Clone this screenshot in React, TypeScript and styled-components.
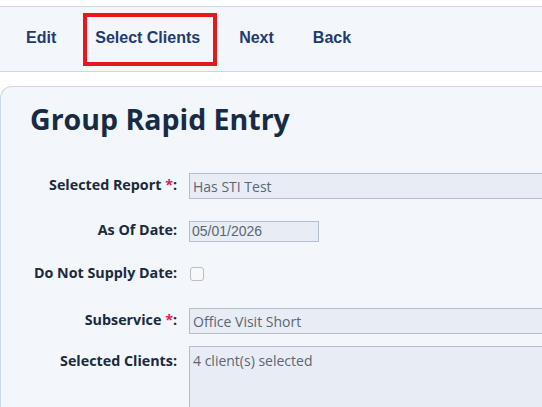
import React from "react";
import styled, { createGlobalStyle } from "styled-components";

const GlobalStyle = createGlobalStyle`
  html, body {
    margin: 0;
    padding: 0;
    background: #ffffff;
    overflow: hidden;
  }
`;

type NavItem = { label: string; active?: boolean };

const navItems: NavItem[] = [
  { label: "Edit" },
  { label: "Select Clients", active: true },
  { label: "Next" },
  { label: "Back" },
];

const App: React.FC = () => {
  return (
    <Page>
      <GlobalStyle />
      <Toolbar>
        {navItems.map((item) => (
          <NavButton key={item.label} $active={item.active}>
            {item.label}
          </NavButton>
        ))}
      </Toolbar>
      <Card>
        <Title>Group Rapid Entry</Title>
        <Form>
          <Row $height={26} $after={21}>
            <Label>
              Selected Report <Required>*</Required>:
            </Label>
            <TextField readOnly value="Has STI Test" />
          </Row>
          <Row $height={21} $after={20}>
            <Label>As Of Date:</Label>
            <DateField readOnly value="05/01/2026" />
          </Row>
          <Row $height={26} $after={21}>
            <Label>Do Not Supply Date:</Label>
            <Checkbox />
          </Row>
          <Row $height={26} $after={12}>
            <Label>
              Subservice <Required>*</Required>:
            </Label>
            <TextField readOnly value="Office Visit Short" />
          </Row>
          <Row $height={90} $after={0} $top>
            <Label $top>Selected Clients:</Label>
            <ClientsBox readOnly value="4 client(s) selected" />
          </Row>
        </Form>
      </Card>
    </Page>
  );
};

export default App;

const Page = styled.div`
  padding-top: 6px;
  width: 542px;
`;

const Toolbar = styled.nav`
  display: flex;
  align-items: center;
  gap: 15px;
  height: 64px;
  padding-left: 14px;
  margin-right: -20px;
  background: #f3f6fb;
  border-top: 1px solid #c9d8ea;
  border-bottom: 1px solid #c9d8ea;
`;

const NavButton = styled.button<{ $active?: boolean }>`
  display: flex;
  align-items: center;
  height: 53px;
  padding: 0 ${(p) => (p.$active ? "13px" : "8px")} 2px 8px;
  margin: 0 ${(p) => (p.$active ? "-5px" : "0")} 0 0;
  background: transparent;
  border: 4px solid ${(p) => (p.$active ? "#e3191e" : "transparent")};
  font-family: "Liberation Sans", Arial, sans-serif;
  font-weight: 700;
  font-size: 16px;
  color: #1f3b70;
  cursor: pointer;
`;

const Card = styled.section`
  margin-top: 14px;
  margin-right: -40px;
  height: 400px;
  padding: 13px 0 0 29px;
  background: #f3f6fb;
  border: 1px solid #c9d8ea;
  border-right: none;
  border-radius: 12px 0 0 0;
`;

const Title = styled.h1`
  margin: 0 0 35px;
  font-family: "Open Sans", "Noto Sans", sans-serif;
  font-weight: 700;
  font-size: 28.5px;
  line-height: 38px;
  color: #172b45;
`;

const Form = styled.div`
  display: flex;
  flex-direction: column;
`;

const Row = styled.div<{ $height: number; $after: number; $top?: boolean }>`
  display: grid;
  grid-template-columns: 147px 1fr;
  column-gap: 12px;
  align-items: ${(p) => (p.$top ? "start" : "center")};
  height: ${(p) => p.$height}px;
  margin-bottom: ${(p) => p.$after}px;
`;

const Label = styled.label<{ $top?: boolean }>`
  text-align: right;
  white-space: nowrap;
  font-family: "Open Sans", "Noto Sans", sans-serif;
  font-weight: 700;
  font-size: 14.3px;
  color: #1b2a3d;
  padding: ${(p) => (p.$top ? "5px 0 0" : "0 0 3px")};
`;

const Required = styled.span`
  color: #e5195c;
`;

const fieldBase = `
  box-sizing: border-box;
  margin: 0;
  background: #e8edf5;
  border: 1px solid #b3bfcc;
  color: #5b6573;
  outline: none;
`;

const TextField = styled.input`
  ${fieldBase}
  width: 420px;
  height: 26px;
  padding: 0 3px;
  font-family: "Open Sans", "Noto Sans", sans-serif;
  font-size: 14px;
`;

const DateField = styled.input`
  ${fieldBase}
  width: 130px;
  height: 21px;
  padding: 0 2px;
  font-family: "Liberation Sans", Arial, sans-serif;
  font-size: 14px;
`;

const Checkbox = styled.span`
  display: block;
  box-sizing: border-box;
  width: 14px;
  height: 14px;
  margin-left: 1px;
  background: #f7f8fa;
  border: 1px solid #b9bec6;
  border-radius: 3px;
`;

const ClientsBox = styled.textarea`
  ${fieldBase}
  width: 420px;
  height: 90px;
  padding: 4px 3px;
  resize: none;
  font-family: "Open Sans", "Noto Sans", sans-serif;
  font-size: 14px;
`;
